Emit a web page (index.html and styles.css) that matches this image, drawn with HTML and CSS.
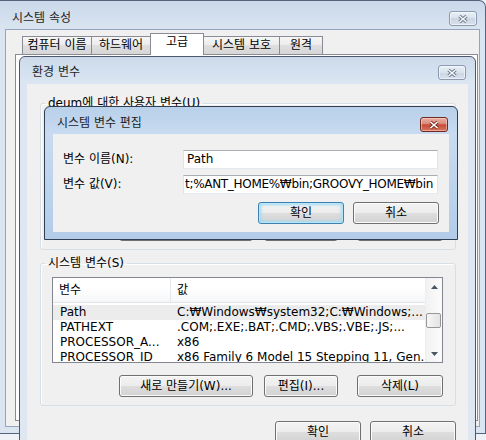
FILE: index.html
```html
<!DOCTYPE html>
<html lang="ko">
<head>
<meta charset="UTF-8">
<title>시스템 속성</title>
<link rel="stylesheet" href="styles.css">
</head>
<body>
<div class="desk">
    <!-- 시스템 속성 -->
    <div class="win outer">
        <div class="titlebar">
            <span class="title">시스템 속성</span>
            <span class="close">
                <svg width="12" height="10" viewBox="0 0 12 10"><path d="M2.5 2L9.5 8M9.5 2L2.5 8" stroke="#6a7888" stroke-width="3.4"/><path d="M2.5 2L9.5 8M9.5 2L2.5 8" stroke="#f4f7fb" stroke-width="1.6"/></svg>
            </span>
        </div>
        <div class="client">
            <div class="tabs">
                <div class="tab t1">컴퓨터 이름</div>
                <div class="tab t2">하드웨어</div>
                <div class="tab t3 active">고급</div>
                <div class="tab t4">시스템 보호</div>
                <div class="tab t5">원격</div>
            </div>
            <div class="tabpage"></div>
        </div>
    </div>

    <!-- 환경 변수 -->
    <div class="win env">
        <div class="titlebar">
            <span class="title">환경 변수</span>
            <span class="close">
                <svg width="12" height="10" viewBox="0 0 12 10"><path d="M2.5 2L9.5 8M9.5 2L2.5 8" stroke="#6a7888" stroke-width="3.4"/><path d="M2.5 2L9.5 8M9.5 2L2.5 8" stroke="#f4f7fb" stroke-width="1.6"/></svg>
            </span>
        </div>
        <div class="client">
            <fieldset class="group user">
                <legend>deum에 대한 사용자 변수(U)</legend>
                <div class="inner">
                    <div class="list"></div>
                    <div class="btnrow">
                        <button class="btn w-new">새로 만들기(N)...</button>
                        <button class="btn w-edit">편집(E)...</button>
                        <button class="btn w-del">삭제(D)</button>
                    </div>
                </div>
            </fieldset>

            <fieldset class="group sys">
                <legend>시스템 변수(S)</legend>
                <div class="inner">
                    <div class="list">
                        <div class="list-main">
                            <div class="header">
                                <span class="hcell">변수</span>
                                <span class="hcell">값</span>
                            </div>
                            <div class="rows">
                                <div class="row sel"><span class="name">Path</span><span class="val">C:₩Windows₩system32;C:₩Windows;...</span></div>
                                <div class="row"><span class="name">PATHEXT</span><span class="val">.COM;.EXE;.BAT;.CMD;.VBS;.VBE;.JS;...</span></div>
                                <div class="row"><span class="name">PROCESSOR_A...</span><span class="val">x86</span></div>
                                <div class="row"><span class="name">PROCESSOR_ID</span><span class="val">x86 Family 6 Model 15 Stepping 11, Gen...</span></div>
                            </div>
                        </div>
                        <div class="vscroll">
                            <span class="arrow"><svg width="7" height="4" viewBox="0 0 7 4"><path d="M0 4L3.5 0L7 4Z" fill="#4a5564"/></svg></span>
                            <span class="track"><span class="thumb"></span></span>
                            <span class="arrow"><svg width="7" height="4" viewBox="0 0 7 4"><path d="M0 0L3.5 4L7 0Z" fill="#4a5564"/></svg></span>
                        </div>
                    </div>
                    <div class="btnrow">
                        <button class="btn w-new">새로 만들기(W)...</button>
                        <button class="btn w-edit">편집(I)...</button>
                        <button class="btn w-del">삭제(L)</button>
                    </div>
                </div>
            </fieldset>

            <div class="dlg-buttons">
                <button class="btn w-ok">확인</button>
                <button class="btn w-ok">취소</button>
            </div>
        </div>
    </div>

    <!-- 시스템 변수 편집 -->
    <div class="win edit">
        <div class="titlebar">
            <span class="title">시스템 변수 편집</span>
            <span class="close red">
                <svg width="12" height="10" viewBox="0 0 12 10"><path d="M2.5 2L9.5 8M9.5 2L2.5 8" stroke="#7a2a20" stroke-width="3.4"/><path d="M2.5 2L9.5 8M9.5 2L2.5 8" stroke="#fff" stroke-width="1.6"/></svg>
            </span>
        </div>
        <div class="client">
            <div class="form">
                <label>변수 이름(N):</label>
                <div class="field">Path</div>
                <label>변수 값(V):</label>
                <div class="field tight">t;%ANT_HOME%₩bin;GROOVY_HOME₩bin</div>
            </div>
            <div class="form-buttons">
                <button class="btn default w-ok">확인</button>
                <button class="btn w-ok">취소</button>
            </div>
        </div>
    </div>
</div>
</body>
</html>
```

FILE: styles.css
```css
* {
    box-sizing: border-box;
}
body {
    margin: 0;
    font: 12px/15px "DejaVu Sans", "Noto Sans CJK KR", sans-serif;
    color: #000;
    background: #eef2f7;
}
.desk {
    position: relative;
    width: 486px;
    height: 440px;
    overflow: hidden;
}

/* window frames (win7 basic) */
.win {
    display: flex;
    flex-direction: column;
}
.titlebar {
    display: flex;
    justify-content: space-between;
    align-items: flex-start;
    flex: none;
}
.title {
    color: #1e1e1e;
    white-space: nowrap;
}
.close {
    width: 28px;
    height: 15px;
    display: flex;
    align-items: center;
    justify-content: center;
    border: 1px solid #8a9ab0;
    border-radius: 3px;
    background: linear-gradient(#e9eff6, #d9e2ed 50%, #cbd6e3 50%, #d8e1ec);
    box-shadow: inset 0 0 0 1px rgba(255, 255, 255, 0.55);
}
.close.red {
    border-color: #6d2b24;
    background: linear-gradient(#eab0a4, #d98a7a 45%, #c84a35 52%, #d5765f);
    box-shadow: inset 0 0 0 1px rgba(255, 220, 210, 0.5);
}

.outer {
    width: 486px;
    height: 434px;
    padding: 0 5px 6px 5px;
    border: 1px solid #56647a;
    border-left: 0;
    border-top-right-radius: 7px;
    background: linear-gradient(#c9d8ea, #dbe5f1 30px, #dbe5f1);
}
.outer .titlebar {
    height: 28px;
}
.outer .title {
    margin: 10px 0 0 7px;
}
.outer .close {
    margin: 10px 3px 0 0;
}
.outer .client {
    flex: 1;
    display: flex;
    flex-direction: column;
    background: #f0f0f0;
    border: 1px solid #94a5bb;
}

.tabs {
    display: flex;
    align-items: flex-end;
    height: 21px;
    margin: 3px 0 0 16px;
}
.tab {
    height: 18px;
    padding-top: 1px;
    text-align: center;
    white-space: nowrap;
    border: 1px solid #898c95;
    border-bottom: 0;
    background: linear-gradient(#f6f6f6, #ebebeb 50%, #dedede 50%, #d6d6d6);
}
.tab + .tab {
    margin-left: -1px;
}
.tab.active {
    height: 22px;
    margin-bottom: -1px;
    position: relative;
    background: #fff;
}
.t1 { width: 70px; }
.t2 { width: 60px; }
.t3 { width: 54px; }
.t4 { width: 77px; }
.t5 { width: 44px; }
.tabpage {
    flex: 1;
    margin: 0 1px 5px 9px;
    background: #fff;
    border: 1px solid #898c95;
}

/* 환경 변수 */
.env {
    position: absolute;
    left: 19px;
    top: 56px;
    width: 457px;
    height: 400px;
    padding: 0 7px;
    border: 1px solid #4b596b;
    border-radius: 6px 6px 0 0;
    background: linear-gradient(#cbdaeb, #dce6f2 27px, #dfe7f1);
}
.env .titlebar {
    height: 27px;
}
.env .title {
    margin: 8px 0 0 5px;
}
.env .close {
    margin: 8px 2px 0 0;
}
.env .client {
    flex: 1;
    background: #f0f0f0;
    padding-left: 13px;
}

.group {
    width: 416px;
    margin: 0;
    padding: 0;
    min-width: 0;
    border: 1px solid #d5dfe5;
    border-radius: 3px;
    box-shadow: inset 1px 1px 0 #fff;
}
.group legend {
    margin-left: 4px;
    padding: 0 3px;
    white-space: nowrap;
}
.group .inner {
    padding: 6px 12px 8px 11px;
}
.group.user {
    margin-top: 12px;
}
.group.sys {
    margin-top: 6px;
}
.user .list {
    height: 90px;
}

.list {
    height: 86px;
    display: flex;
    background: #fff;
    border: 1px solid #828790;
}
.list-main {
    flex: 1;
    min-width: 0;
}
.header {
    display: grid;
    grid-template-columns: 117px 1fr;
    height: 25px;
    align-items: center;
    background: linear-gradient(#fff 45%, #f5f6f7);
    border-bottom: 1px solid #e2e4e7;
}
.hcell {
    padding-left: 6px;
    height: 100%;
    display: flex;
    align-items: center;
}
.hcell + .hcell {
    border-left: 1px solid #e3e8ee;
}
.rows {
    height: 59px;
    padding-top: 2px;
    overflow: hidden;
}
.row {
    display: grid;
    grid-template-columns: 118px 1fr;
    height: 15px;
    white-space: nowrap;
}
.row.sel {
    background: #ececec;
}
.name {
    padding-left: 7px;
    overflow: hidden;
}
.val {
    padding-left: 6px;
    overflow: hidden;
}

.vscroll {
    width: 17px;
    flex: none;
    display: flex;
    flex-direction: column;
    background: linear-gradient(to right, #f2f2f2, #fbfbfb);
    border-left: 1px solid #eeeeee;
}
.arrow {
    height: 17px;
    display: flex;
    align-items: center;
    justify-content: center;
}
.track {
    flex: 1;
    padding: 18px 1px 0 0;
}
.thumb {
    display: block;
    height: 15px;
    border: 1px solid #979797;
    border-radius: 2px;
    background: linear-gradient(to right, #f7f7f7, #e3e3e3);
}

.btnrow {
    display: flex;
    justify-content: flex-end;
    margin-top: 12px;
}
.btn {
    height: 22px;
    padding: 0;
    font: inherit;
    color: #000;
    white-space: nowrap;
    border: 1px solid #707070;
    border-radius: 3px;
    background: linear-gradient(#f3f3f3, #ececec 50%, #dedede 50%, #d2d2d2);
    box-shadow: inset 0 0 0 1px #fbfbfb;
}
.w-new { width: 134px; }
.w-edit { width: 74px; margin-left: 11px; }
.w-del { width: 86px; margin-left: 19px; }
.w-ok { width: 86px; }
.btn.default {
    border-color: #3c7fb1;
    box-shadow: inset 0 0 0 1px #b9e6f8, inset 0 0 3px 2px #9fd9f2;
}
.dlg-buttons {
    width: 416px;
    display: flex;
    justify-content: flex-end;
    gap: 9px;
    margin-top: 15px;
}

/* 시스템 변수 편집 */
.edit {
    position: absolute;
    left: 44px;
    top: 106px;
    width: 414px;
    height: 134px;
    padding: 0 8px 7px;
    border: 1px solid #2f3e51;
    border-radius: 6px 6px 0 0;
    background: linear-gradient(#b8d0ea, #c8dbf0 27px, #b2cce9);
}
.edit .titlebar {
    height: 27px;
}
.edit .title {
    margin: 9px 0 0 4px;
}
.edit .close {
    margin: 10px 1px 0 0;
}
.edit .client {
    flex: 1;
    background: #f0f0f0;
    padding: 16px 10px 0 10px;
}
.form {
    display: grid;
    grid-template-columns: 120px 255px;
    row-gap: 6px;
    align-items: center;
}
.field {
    height: 19px;
    padding-left: 3px;
    background: #fff;
    white-space: nowrap;
    overflow: hidden;
    line-height: 17px;
    border: 1px solid #e2e3ea;
    border-top-color: #abadb3;
    border-bottom-color: #e3e9ef;
}
.field.tight {
    padding-left: 1px;
    letter-spacing: -0.3px;
}
.form-buttons {
    display: flex;
    justify-content: flex-end;
    gap: 9px;
    margin-top: 8px;
}
```
